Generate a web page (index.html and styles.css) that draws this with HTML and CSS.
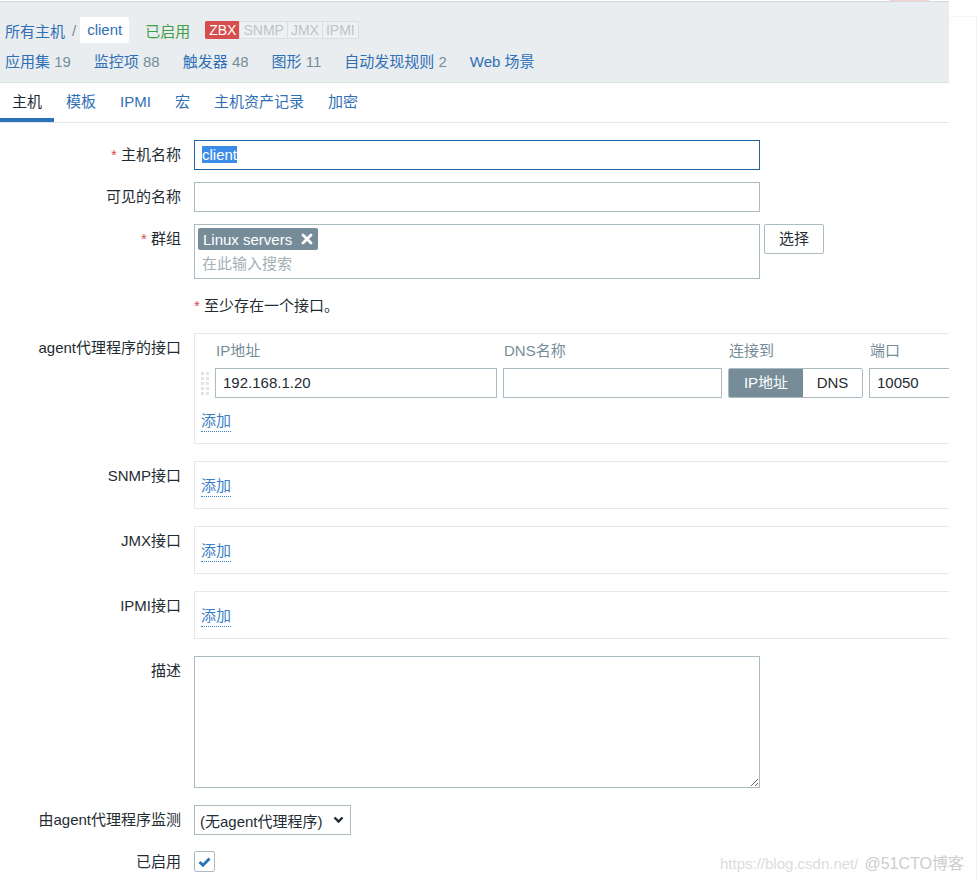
FILE: index.html
```html
<!DOCTYPE html>
<html lang="zh-CN">
<head>
<meta charset="utf-8">
<title>主机</title>
<link rel="stylesheet" href="styles.css">
</head>
<body>
<div class="page">
  <div class="main">
    <div class="topline"><span class="redbit"></span></div>
    <header class="hdr">
      <div class="crumbs">
        <a class="lnk" href="#">所有主机</a><span class="sep">/</span><span class="cur">client</span>
        <span class="status">已启用</span>
        <span class="badges"><span class="b zbx">ZBX</span><span class="b">SNMP</span><span class="b">JMX</span><span class="b last">IPMI</span></span>
      </div>
      <nav class="sub">
        <a href="#">应用集 <span class="cnt">19</span></a>
        <a href="#">监控项 <span class="cnt">88</span></a>
        <a href="#">触发器 <span class="cnt">48</span></a>
        <a href="#">图形 <span class="cnt">11</span></a>
        <a href="#">自动发现规则 <span class="cnt">2</span></a>
        <a href="#">Web 场景</a>
      </nav>
    </header>
    <nav class="tabs">
      <span class="tab active">主机</span>
      <span class="tab">模板</span>
      <span class="tab">IPMI</span>
      <span class="tab">宏</span>
      <span class="tab">主机资产记录</span>
      <span class="tab">加密</span>
    </nav>

    <div class="form">
      <div class="lbl"><span class="req">*</span> 主机名称</div>
      <div class="fld"><div class="inp focus"><span class="hl">client</span></div></div>

      <div class="lbl">可见的名称</div>
      <div class="fld"><div class="inp"></div></div>

      <div class="lbl"><span class="req">*</span> 群组</div>
      <div class="fld msrow">
        <div class="ms">
          <span class="tag">Linux servers<svg class="x" width="12" height="12" viewBox="0 0 12 12"><path d="M2 2 L10 10 M10 2 L2 10" stroke="#fff" stroke-width="2.8" stroke-linecap="round"/></svg></span>
          <div class="ph">在此输入搜索</div>
        </div>
        <span class="btn">选择</span>
      </div>

      <div class="lbl"></div>
      <div class="fld note"><span class="req">*</span> 至少存在一个接口。</div>

      <div class="lbl">agent代理程序的接口</div>
      <div class="fld">
        <div class="ifbox">
          <div class="ifgrid">
            <span></span>
            <span class="ifh">IP地址</span>
            <span class="ifh">DNS名称</span>
            <span class="ifh">连接到</span>
            <span class="ifh">端口</span>
            <span class="handle"><svg width="8" height="23" viewBox="0 0 8 23"><g fill="#e1e5e8"><rect x="0" y="0" width="3" height="3"/><rect x="5" y="0" width="3" height="3"/><rect x="0" y="5" width="3" height="3"/><rect x="5" y="5" width="3" height="3"/><rect x="0" y="10" width="3" height="3"/><rect x="5" y="10" width="3" height="3"/><rect x="0" y="15" width="3" height="3"/><rect x="5" y="15" width="3" height="3"/><rect x="0" y="20" width="3" height="3"/><rect x="5" y="20" width="3" height="3"/></g></svg></span>
            <div class="inp w-auto">192.168.1.20</div>
            <div class="inp w-auto"></div>
            <div class="tog"><span class="on">IP地址</span><span class="off">DNS</span></div>
            <div class="inp w-auto">10050</div>
          </div>
          <a class="add" href="#">添加</a>
        </div>
      </div>

      <div class="lbl">SNMP接口</div>
      <div class="fld"><div class="ifbox small"><a class="add" href="#">添加</a></div></div>

      <div class="lbl">JMX接口</div>
      <div class="fld"><div class="ifbox small"><a class="add" href="#">添加</a></div></div>

      <div class="lbl">IPMI接口</div>
      <div class="fld"><div class="ifbox small"><a class="add" href="#">添加</a></div></div>

      <div class="lbl">描述</div>
      <div class="fld"><textarea class="ta"></textarea></div>

      <div class="lbl">由agent代理程序监测</div>
      <div class="fld"><div class="select"><span>(无agent代理程序)</span><svg width="11" height="8" viewBox="0 0 11 8"><path d="M1.5 1.5 L5.5 5.5 L9.5 1.5" fill="none" stroke="#1f2c33" stroke-width="2.4"/></svg></div></div>

      <div class="lbl">已启用</div>
      <div class="fld"><span class="cb"><svg width="13" height="10" viewBox="0 0 13 10"><path d="M1.5 5 L5 8.3 L11.5 1.5" fill="none" stroke="#2a72b5" stroke-width="2.8"/></svg></span></div>
    </div>
  </div>
  <div class="rstrip"></div>
  <div class="wm"><span class="wm-url">https://blog.csdn.net/</span><span class="wm-51">@51CTO博客</span></div>
</div>
</body>
</html>
```

FILE: styles.css
```css
* { box-sizing: border-box; }

body {
  margin: 0;
  font-family: "Liberation Sans", "Noto Sans CJK SC", sans-serif;
  font-size: 15px;
  color: #1f2c33;
  background: #fff;
}

a { text-decoration: none; }

.page {
  display: flex;
  position: relative;
  height: 879px;
  overflow: hidden;
}

.main {
  flex: 0 0 949px;
  width: 949px;
  overflow: hidden;
}

.topline {
  height: 1px;
  display: flex;
}

.redbit {
  margin-left: 889px;
  width: 40px;
  height: 1px;
  background: #f6d3d3;
}

/* header */
.hdr {
  background: #e9edf0;
  border-top: 1px solid #d5dadd;
  border-bottom: 1px solid #dadfe2;
  padding: 15px 0 11px 5px;
}

.crumbs {
  display: flex;
  align-items: center;
  height: 26px;
}

.lnk { color: #2f6fb5; }

.sep {
  color: #768d99;
  margin: 0 4px 0 7px;
}

.cur {
  background: #fff;
  height: 26px;
  line-height: 26px;
  padding: 0 7px;
  border-radius: 2px;
  color: #2f6fb5;
}

.status {
  color: #429e47;
  margin-left: 16px;
}

.badges {
  display: flex;
  margin-left: 15px;
}

.b {
  font-size: 14px;
  line-height: 16px;
  padding: 0 3px;
  border: 1px solid #d9dee1;
  border-right: none;
  background: #eef1f3;
  color: #bcc4c8;
}

.b.last { border-right: 1px solid #d9dee1; }

.b.zbx {
  background: #d64e4e;
  border-color: #d64e4e;
  color: #fff;
  border-radius: 2px 0 0 2px;
}

.sub {
  display: flex;
  gap: 23px;
  margin-top: 6px;
  height: 22px;
  align-items: center;
}

.sub a { color: #2f6fb5; }

.cnt { color: #768d99; }

/* tabs */
.tabs {
  display: flex;
  height: 40px;
  border-bottom: 1px solid #e3e7ea;
}

.tab {
  padding: 0 12px;
  line-height: 38px;
  color: #2f6fb5;
}

.tab.active {
  color: #1f2c33;
  box-shadow: inset 0 -4px 0 #2c72b8;
}

/* form */
.form {
  display: grid;
  grid-template-columns: 181px 1fr;
  column-gap: 13px;
  row-gap: 12px;
  padding-top: 17px;
}

.lbl {
  text-align: right;
  line-height: 30px;
  white-space: nowrap;
}

.req { color: #d64e4e; }

.fld { min-width: 0; }

.inp {
  width: 566px;
  height: 30px;
  border: 1px solid #acbbc2;
  padding: 0 7px;
  line-height: 28px;
  background: #fff;
  color: #1f2c33;
  white-space: nowrap;
  overflow: hidden;
}

.inp.w-auto { width: auto; }

.inp.focus { border-color: #2064a5; }

.hl {
  background: #3a8ce8;
  color: #fff;
}

.msrow {
  display: flex;
  align-items: flex-start;
  gap: 4px;
}

.ms {
  flex: 0 0 566px;
  height: 55px;
  border: 1px solid #acbbc2;
  padding: 3px;
}

.tag {
  display: inline-flex;
  align-items: center;
  height: 22px;
  gap: 9px;
  padding: 0 5px;
  background: #768d99;
  color: #fff;
  border-radius: 2px;
  vertical-align: top;
}

.ph {
  color: #a4afb5;
  line-height: 22px;
  margin-top: 3px;
  padding-left: 4px;
}

.btn {
  width: 60px;
  height: 30px;
  line-height: 28px;
  text-align: center;
  border: 1px solid #acbbc2;
  border-radius: 2px;
  background: #fff;
  color: #1f2c33;
}

.note { line-height: 30px; }

/* interfaces */
.ifbox {
  width: 770px;
  border: 1px solid #e6e9ec;
  padding: 5px 6px 11px;
  margin-bottom: 5px;
}

.ifbox.small { padding: 13px 6px 11px; }

.ifbox.small .add { margin-top: 0; }

.ifgrid {
  display: grid;
  grid-template-columns: 8px 282px 219px 135px 110px;
  column-gap: 6px;
  row-gap: 5px;
}

.ifh {
  color: #768d99;
  line-height: 24px;
  padding-left: 1px;
}

.handle {
  display: flex;
  align-items: center;
}

.tog {
  display: flex;
  height: 30px;
  border: 1px solid #acbbc2;
  border-radius: 2px;
  overflow: hidden;
}

.tog span {
  line-height: 28px;
  text-align: center;
}

.tog .on {
  width: 74px;
  background: #768d99;
  color: #fff;
}

.tog .off { flex: 1; }

.add {
  display: inline-block;
  margin-top: 12px;
  line-height: 21px;
  color: #3a80c6;
  border-bottom: 1px dotted #3a80c6;
}

.ta {
  display: block;
  width: 566px;
  height: 132px;
  border: 1px solid #acbbc2;
  margin: 0 0 5px;
  padding: 4px 7px;
  font: inherit;
  resize: both;
  border-radius: 0;
}

.select {
  width: 157px;
  height: 30px;
  border: 1px solid #acbbc2;
  display: flex;
  align-items: center;
  justify-content: space-between;
  padding: 0 6px 0 5px;
  white-space: nowrap;
}

.cb {
  display: flex;
  align-items: center;
  justify-content: center;
  width: 21px;
  height: 21px;
  margin-top: 4px;
  border: 1px solid #acbbc2;
  border-radius: 2px;
}

.rstrip {
  flex: 0 0 28px;
  margin-top: 16px;
  border-top: 1px solid #f6f6f6;
  border-right: 1px solid #f1f1f1;
  margin-right: 1px;
  background: #fefefe;
}

/* watermark over content */
.wm {
  position: absolute;
  left: 720px;
  top: 850px;
  display: flex;
  align-items: baseline;
  white-space: nowrap;
}

.wm-url {
  font-size: 15px;
  color: #dcdcdc;
}

.wm-51 {
  font-size: 16px;
  color: #cdcdcd;
  margin-left: 6px;
}
```
